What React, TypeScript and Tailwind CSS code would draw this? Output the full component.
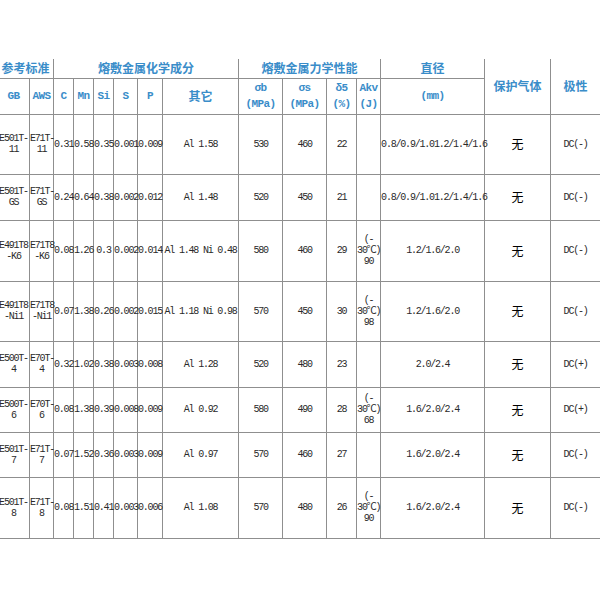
import React from "react";

type Row = {
  gb: [string, string];
  aws: [string, string];
  c: string;
  mn: string;
  si: string;
  s: string;
  p: string;
  other: string;
  sb: string;
  ss: string;
  d5: string;
  akv: string | null;
  dia: string;
  gas: string;
  pol: string;
  h: string;
};

const rows: Row[] = [
  { gb: ["E501T-", "11"], aws: ["E71T-", "11"], c: "0.31", mn: "0.58", si: "0.35", s: "0.001", p: "0.009", other: "Al 1.58", sb: "530", ss: "460", d5: "22", akv: null, dia: "0.8/0.9/1.01.2/1.4/1.6", gas: "无", pol: "DC(-)", h: "h-[60px]" },
  { gb: ["E501T-", "GS"], aws: ["E71T-", "GS"], c: "0.24", mn: "0.64", si: "0.38", s: "0.002", p: "0.012", other: "Al 1.48", sb: "520", ss: "450", d5: "21", akv: null, dia: "0.8/0.9/1.01.2/1.4/1.6", gas: "无", pol: "DC(-)", h: "h-[46px]" },
  { gb: ["E491T8", "-K6"], aws: ["E71T8", "-K6"], c: "0.08", mn: "1.26", si: "0.3", s: "0.002", p: "0.014", other: "Al 1.48 Ni 0.48", sb: "580", ss: "460", d5: "29", akv: "90", dia: "1.2/1.6/2.0", gas: "无", pol: "DC(-)", h: "h-[61px]" },
  { gb: ["E491T8", "-Ni1"], aws: ["E71T8", "-Ni1"], c: "0.07", mn: "1.38", si: "0.26", s: "0.002", p: "0.015", other: "Al 1.18 Ni 0.98", sb: "570", ss: "450", d5: "30", akv: "98", dia: "1.2/1.6/2.0", gas: "无", pol: "DC(-)", h: "h-[60px]" },
  { gb: ["E500T-", "4"], aws: ["E70T-", "4"], c: "0.32", mn: "1.02", si: "0.38", s: "0.003", p: "0.008", other: "Al 1.28", sb: "520", ss: "480", d5: "23", akv: null, dia: "2.0/2.4", gas: "无", pol: "DC(+)", h: "h-[46px]" },
  { gb: ["E500T-", "6"], aws: ["E70T-", "6"], c: "0.08", mn: "1.38", si: "0.39", s: "0.008", p: "0.009", other: "Al 0.92", sb: "580", ss: "490", d5: "28", akv: "68", dia: "1.6/2.0/2.4", gas: "无", pol: "DC(+)", h: "h-[45px]" },
  { gb: ["E501T-", "7"], aws: ["E71T-", "7"], c: "0.07", mn: "1.52", si: "0.36", s: "0.003", p: "0.009", other: "Al 0.97", sb: "570", ss: "460", d5: "27", akv: null, dia: "1.6/2.0/2.4", gas: "无", pol: "DC(-)", h: "h-[45px]" },
  { gb: ["E501T-", "8"], aws: ["E71T-", "8"], c: "0.08", mn: "1.51", si: "0.41", s: "0.003", p: "0.006", other: "Al 1.08", sb: "570", ss: "480", d5: "26", akv: "90", dia: "1.6/2.0/2.4", gas: "无", pol: "DC(-)", h: "h-[61px]" },
];

const cell = "border border-[#8f8f8f] p-0 text-center align-middle whitespace-nowrap";
const hcn = "font-['Noto_Sans_CJK_SC',sans-serif] text-[12px] font-bold text-[#3a8dc9] leading-[16px]";
const hla = "font-['Liberation_Mono',monospace] text-[11px] font-bold text-[#3a8dc9] leading-[16px] tracking-[-0.6px]";
const body = "font-['Liberation_Mono','Noto_Sans_CJK_SC',monospace] text-[10px] text-[#2a2a2a] leading-[11px] tracking-[-1.2px]";

export default function App() {
  return (
    <div className="w-[600px] h-[600px] bg-white overflow-hidden pt-[59px]">
      <table className="table-fixed border-collapse -ml-[3px] w-[603px]">
        <colgroup>
          <col className="w-[32px]" />
          <col className="w-[24px]" />
          <col className="w-[20px]" />
          <col className="w-[20px]" />
          <col className="w-[20px]" />
          <col className="w-[24px]" />
          <col className="w-[25px]" />
          <col className="w-[76px]" />
          <col className="w-[44px]" />
          <col className="w-[44px]" />
          <col className="w-[30px]" />
          <col className="w-[24px]" />
          <col className="w-[104px]" />
          <col className="w-[66px]" />
          <col className="w-[50px]" />
        </colgroup>
        <thead>
          <tr className="h-[19px]">
            <th colSpan={2} className={`${cell} ${hcn} border-t-0`}>参考标准</th>
            <th colSpan={6} className={`${cell} ${hcn} border-t-0`}>熔敷金属化学成分</th>
            <th colSpan={4} className={`${cell} ${hcn} border-t-0`}>熔敷金属力学性能</th>
            <th className={`${cell} ${hcn} border-t-0`}>直径</th>
            <th rowSpan={2} className={`${cell} ${hcn} border-t-0`}>保护气体</th>
            <th rowSpan={2} className={`${cell} ${hcn} border-t-0`}>极性</th>
          </tr>
          <tr className="h-[36px]">
            <th className={`${cell} ${hla}`}>GB</th>
            <th className={`${cell} ${hla}`}>AWS</th>
            <th className={`${cell} ${hla}`}>C</th>
            <th className={`${cell} ${hla}`}>Mn</th>
            <th className={`${cell} ${hla}`}>Si</th>
            <th className={`${cell} ${hla}`}>S</th>
            <th className={`${cell} ${hla}`}>P</th>
            <th className={`${cell} ${hcn}`}>其它</th>
            <th className={`${cell} ${hla}`}>σb<br />(MPa)</th>
            <th className={`${cell} ${hla}`}>σs<br />(MPa)</th>
            <th className={`${cell} ${hla}`}>δ5<br />(%)</th>
            <th className={`${cell} ${hla}`}>Akv<br />(J)</th>
            <th className={`${cell} ${hla}`}>(mm)</th>
          </tr>
        </thead>
        <tbody>
          {rows.map((r, i) => (
            <tr key={i} className={r.h}>
              <td className={`${cell} ${body}`}>{r.gb[0]}<br />{r.gb[1]}</td>
              <td className={`${cell} ${body}`}>{r.aws[0]}<br />{r.aws[1]}</td>
              <td className={`${cell} ${body}`}>{r.c}</td>
              <td className={`${cell} ${body}`}>{r.mn}</td>
              <td className={`${cell} ${body}`}>{r.si}</td>
              <td className={`${cell} ${body}`}>{r.s}</td>
              <td className={`${cell} ${body}`}>{r.p}</td>
              <td className={`${cell} ${body}`}>{r.other}</td>
              <td className={`${cell} ${body}`}>{r.sb}</td>
              <td className={`${cell} ${body}`}>{r.ss}</td>
              <td className={`${cell} ${body}`}>{r.d5}</td>
              <td className={`${cell} ${body}`}>
                {r.akv ? (
                  <>
                    (-<br />30℃)<br />{r.akv}
                  </>
                ) : null}
              </td>
              <td className={`${cell} ${body}`}>{r.dia}</td>
              <td className={`${cell} font-['Noto_Sans_CJK_SC',sans-serif] text-[12px] text-black`}>{r.gas}</td>
              <td className={`${cell} ${body}`}>{r.pol}</td>
            </tr>
          ))}
        </tbody>
      </table>
    </div>
  );
}
